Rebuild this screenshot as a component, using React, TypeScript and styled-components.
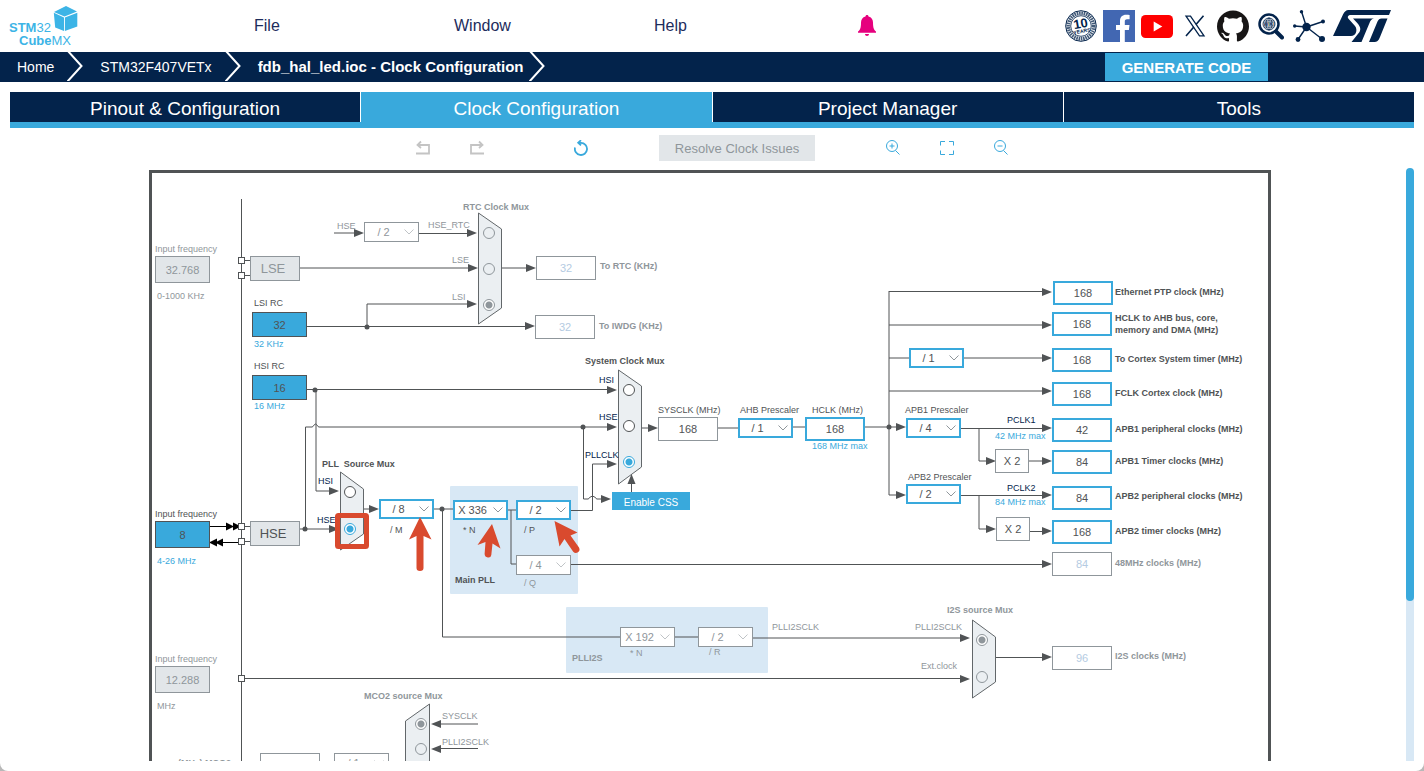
import React from "react";
import styled, { createGlobalStyle, css } from "styled-components";
import { SiGithub } from "react-icons/si";

const color = {
  navy: "#03234b",
  sky: "#39a9dc",
  pale: "#d8e8f5",
  ink: "#505355",
  grey: "#8f969b",
  faded: "#b4cbe2",
  fill: "#e2e6e9",
  red: "#d94a2e",
};

/* Top-left corner of the drawing sheet, in diagram units. */
const SHEET = { x: 152, y: 173 };
const SHEET_WIDTH = 1116;
const SHEET_HEIGHT = 800;

const GlobalStyle = createGlobalStyle`
  * { box-sizing: border-box; }
  body {
    margin: 0;
    background: #b8b8b8;
    font-family: "Liberation Sans", Arial, sans-serif;
  }
  button, input, select { font-family: inherit; margin: 0; }
`;

const Page = styled.div`
  display: flex;
  flex-direction: column;
  height: 100vh;
  padding-bottom: 10px;
  overflow: hidden;
  background: #fff;
  border-radius: 0 0 8px 8px;
`;

/* ---------- header ---------- */

const Header = styled.header`
  display: flex;
  align-items: center;
  flex: none;
  height: 52px;
  padding-right: 31px;
`;

const LogoLink = styled.a`
  display: block;
  flex: 0 0 254px;
  height: 52px;
  svg { display: block; }
`;

const Menu = styled.nav`
  display: flex;
  flex: 0 1 600px;
`;

const MenuButton = styled.button`
  flex: 0 1 200px;
  padding: 0;
  border: 0;
  background: none;
  color: #1d2c5c;
  font-size: 16px;
  line-height: 20px;
  text-align: left;
`;

const BellButton = styled.button`
  display: flex;
  margin-left: 3px;
  padding: 0;
  border: 0;
  background: none;
`;

const Links = styled.div`
  display: flex;
  align-items: center;
  gap: 6px;
  margin-left: auto;
`;

const IconLink = styled.a<{ $width: number; $color?: string }>`
  display: flex;
  justify-content: center;
  flex: none;
  width: ${(p) => p.$width}px;
  color: ${(p) => p.$color ?? color.navy};
`;

/* ---------- breadcrumb ---------- */

const CrumbBar = styled.div`
  display: flex;
  justify-content: space-between;
  align-items: center;
  flex: none;
  height: 30px;
  padding-right: 156px;
  background: ${color.navy};
`;

const Crumbs = styled.nav`
  display: flex;
`;

const Crumb = styled.a<{ $current?: boolean }>`
  padding: 0 ${(p) => (p.$current ? 6 : 13)}px 0 17px;
  color: #fff;
  font-size: ${(p) => (p.$current ? 15 : 14)}px;
  font-weight: ${(p) => (p.$current ? 700 : 400)};
  line-height: 32px;
  white-space: nowrap;
  text-decoration: none;
`;

const GenerateButton = styled.button`
  width: 163px;
  height: 28px;
  padding: 0;
  border: 0;
  background: ${color.sky};
  color: #fff;
  font-size: 15px;
  font-weight: 700;
`;

/* ---------- tabs ---------- */

const Tabs = styled.div`
  display: grid;
  grid-template-columns: repeat(4, 1fr);
  gap: 1px;
  flex: none;
  margin: 10px 10px 0;
  border-bottom: 6px solid ${color.sky};
`;

const Tab = styled.button<{ $active?: boolean }>`
  height: 30px;
  padding: 3px 0 0;
  border: 0;
  background: ${(p) => (p.$active ? color.sky : color.navy)};
  color: #fff;
  font-size: 19px;
  line-height: 27px;
`;

/* ---------- toolbar ---------- */

const Toolbar = styled.div`
  display: flex;
  align-items: center;
  justify-content: center;
  gap: 71px;
  flex: none;
  height: 40px;
`;

const ToolGroup = styled.div<{ $trail?: number }>`
  display: flex;
  gap: 40px;
  padding-right: ${(p) => p.$trail ?? 0}px;
`;

const ToolButton = styled.button`
  display: flex;
  padding: 0;
  border: 0;
  background: none;
  color: ${color.sky};
  &:disabled { color: #c4c4c4; }
`;

const ResolveButton = styled.button`
  width: 156px;
  height: 26px;
  padding: 0;
  border: 0;
  background: ${color.fill};
  color: ${color.grey};
  font-size: 13px;
`;

/* ---------- diagram ---------- */

const Workspace = styled.main`
  display: flex;
  flex: 1;
  min-height: 0;
  padding: 0 10px 0 14px;
`;

const Viewport = styled.div`
  display: flex;
  justify-content: center;
  align-items: flex-start;
  flex: 1;
  min-width: 0;
  overflow: hidden;
`;

const ScrollTrack = styled.div`
  flex: none;
  width: 8px;
  background: linear-gradient(#fff 10px, ${color.pale} 10px);
`;

const ScrollThumb = styled.div`
  height: 73%;
  border-radius: 4px;
  background: ${color.sky};
`;

const Sheet = styled.div`
  position: relative;
  flex: none;
  width: ${SHEET_WIDTH + 6}px;
  height: ${SHEET_HEIGHT}px;
  margin-top: 2px;
  border: 3px solid ${color.ink};
`;

const Layer = styled.svg`
  position: absolute;
  inset: 0;
  pointer-events: none;
`;

const placed = css<{ $x: number; $y: number }>`
  position: absolute;
  left: ${(p) => p.$x - SHEET.x}px;
  top: ${(p) => p.$y - SHEET.y}px;
`;

const Panel = styled.div<{ $x: number; $y: number; $w: number; $h: number }>`
  ${placed}
  width: ${(p) => p.$w}px;
  height: ${(p) => p.$h}px;
  border-radius: 1px;
  background: ${color.pale};
`;

const Caption = styled.span<{ $x: number; $y: number; $tone: string; $bold?: boolean }>`
  ${placed}
  color: ${(p) => p.$tone};
  font-size: 9px;
  font-weight: ${(p) => (p.$bold ? 700 : 400)};
  line-height: 12px;
  white-space: pre;
`;

type Kind = "live" | "plain" | "off" | "source" | "idle";

const kinds: Record<Kind, ReturnType<typeof css>> = {
  live: css`
    border: 2px solid ${color.sky};
    background: #fff;
    color: ${color.ink};
  `,
  plain: css`
    border: 1px solid ${color.grey};
    background: #fff;
    color: ${color.ink};
  `,
  off: css`
    border: 1px solid ${color.grey};
    background: #fff;
    color: ${color.faded};
  `,
  source: css`
    border: 1px solid ${color.ink};
    background: ${color.sky};
    color: ${color.ink};
  `,
  idle: css`
    border: 1px solid ${color.grey};
    background: ${color.fill};
    color: ${color.grey};
  `,
};

const Field = styled.input<{ $x: number; $y: number; $w: number; $h: number; $kind: Kind }>`
  ${placed}
  width: ${(p) => p.$w}px;
  height: ${(p) => p.$h}px;
  padding: 0;
  border-radius: 0;
  font-size: 11px;
  text-align: center;
  ${(p) => kinds[p.$kind]}
`;

const Oscillator = styled.button<{ $x: number; $y: number; $tone: string }>`
  ${placed}
  width: 50px;
  height: 25px;
  padding: 0 4px 0 0;
  border: 1px solid ${color.grey};
  background: ${color.fill};
  color: ${(p) => p.$tone};
  font-size: 13px;
`;

const Factor = styled.span<{ $x: number; $y: number }>`
  ${placed}
  width: 34px;
  height: 24px;
  border: 1px solid ${color.grey};
  background: #fff;
  color: ${color.ink};
  font-size: 11px;
  line-height: 22px;
  text-align: center;
`;

const CssButton = styled.button<{ $x: number; $y: number }>`
  ${placed}
  width: 78px;
  height: 18px;
  padding: 2px 0 0;
  border: 0;
  background: ${color.sky};
  color: #fff;
  font-size: 10px;
`;

const SelectBox = styled.span<{ $x: number; $y: number; $off?: boolean }>`
  ${placed}
  display: block;
  width: 55px;
  height: 20px;
  svg {
    position: absolute;
    right: 5px;
    top: 7px;
    color: ${(p) => (p.$off ? "#c0c4c7" : color.grey)};
    pointer-events: none;
  }
`;

const NativeSelect = styled.select<{ $off?: boolean }>`
  display: block;
  width: 55px;
  height: 20px;
  padding: 0 16px 0 0;
  border: ${(p) => (p.$off ? `1px solid ${color.grey}` : `2px solid ${color.sky}`)};
  border-radius: 0;
  appearance: none;
  background: #fff;
  color: ${(p) => (p.$off ? color.grey : color.ink)};
  font-size: 11px;
  text-align: center;
  text-align-last: center;
  opacity: 1;
`;

const Radio = styled.input<{ $x: number; $y: number; $tone: string }>`
  ${placed}
  width: 12px;
  height: 12px;
  border: 1px solid ${(p) => p.$tone};
  border-radius: 50%;
  appearance: none;
  background: #fff;
  &:disabled { background: transparent; }
  &:checked {
    background: radial-gradient(circle, ${(p) => p.$tone} 3px, #fff 4px);
  }
`;

/* ---------- data ---------- */

type Note = { x: number; y: number; text: string; tone?: string; bold?: boolean; id?: string };

const notes: Note[] = [
  { x: 155, y: 243, text: "Input frequency", tone: color.grey, id: "lse-in" },
  { x: 157, y: 290, text: "0-1000 KHz", tone: color.grey },
  { x: 254, y: 297, text: "LSI RC", id: "lsi-rc" },
  { x: 254, y: 338, text: "32 KHz", tone: color.sky },
  { x: 254, y: 360, text: "HSI RC", id: "hsi-rc" },
  { x: 254, y: 400, text: "16 MHz", tone: color.sky },
  { x: 337, y: 220, text: "HSE", tone: color.grey },
  { x: 428, y: 219, text: "HSE_RTC", tone: color.grey },
  { x: 452, y: 254, text: "LSE", tone: color.grey },
  { x: 452, y: 291, text: "LSI", tone: color.grey },
  { x: 463, y: 201, text: "RTC Clock Mux", tone: color.grey, bold: true },
  { x: 600, y: 260, text: "To RTC (KHz)", tone: color.grey, bold: true, id: "rtc" },
  { x: 599, y: 320, text: "To IWDG (KHz)", tone: color.grey, bold: true, id: "iwdg" },
  { x: 585, y: 355, text: "System Clock Mux", bold: true },
  { x: 599, y: 374, text: "HSI", tone: color.navy },
  { x: 599, y: 411, text: "HSE", tone: color.navy },
  { x: 585, y: 449, text: "PLLCLK", tone: color.navy },
  { x: 658, y: 404, text: "SYSCLK (MHz)", id: "sysclk" },
  { x: 740, y: 404, text: "AHB Prescaler", id: "ahb" },
  { x: 812, y: 404, text: "HCLK (MHz)", id: "hclk" },
  { x: 812, y: 440, text: "168 MHz max", tone: color.sky },
  { x: 905, y: 404, text: "APB1 Prescaler", id: "apb1" },
  { x: 908, y: 471, text: "APB2 Prescaler", id: "apb2" },
  { x: 1007, y: 414, text: "PCLK1", tone: color.navy },
  { x: 995, y: 430, text: "42 MHz max", tone: color.sky },
  { x: 1007, y: 482, text: "PCLK2", tone: color.navy },
  { x: 995, y: 496, text: "84 MHz max", tone: color.sky },
  { x: 1115, y: 286, text: "Ethernet PTP clock (MHz)", bold: true, id: "eth" },
  { x: 1115, y: 312, text: "HCLK to AHB bus, core,\nmemory and DMA (MHz)", bold: true, id: "ahb-bus" },
  { x: 1115, y: 353, text: "To Cortex System timer (MHz)", bold: true, id: "cortex" },
  { x: 1115, y: 387, text: "FCLK Cortex clock (MHz)", bold: true, id: "fclk" },
  { x: 1115, y: 423, text: "APB1 peripheral clocks (MHz)", bold: true, id: "apb1-per" },
  { x: 1115, y: 455, text: "APB1 Timer clocks (MHz)", bold: true, id: "apb1-tim" },
  { x: 1115, y: 490, text: "APB2 peripheral clocks (MHz)", bold: true, id: "apb2-per" },
  { x: 1115, y: 525, text: "APB2 timer clocks (MHz)", bold: true, id: "apb2-tim" },
  { x: 1115, y: 557, text: "48MHz clocks (MHz)", tone: color.grey, bold: true, id: "usb" },
  { x: 1115, y: 650, text: "I2S clocks (MHz)", tone: color.grey, bold: true, id: "i2s" },
  { x: 155, y: 508, text: "Input frequency", id: "hse-in" },
  { x: 157, y: 555, text: "4-26 MHz", tone: color.sky },
  { x: 322, y: 458, text: "PLL  Source Mux", bold: true },
  { x: 318, y: 475, text: "HSI", tone: color.navy },
  { x: 317, y: 514, text: "HSE", tone: color.navy },
  { x: 390, y: 524, text: "/ M", id: "pll-m" },
  { x: 463, y: 524, text: "* N", id: "pll-n" },
  { x: 524, y: 524, text: "/ P", id: "pll-p" },
  { x: 524, y: 577, text: "/ Q", tone: color.grey, id: "pll-q" },
  { x: 455, y: 574, text: "Main PLL", bold: true },
  { x: 630, y: 647, text: "* N", tone: color.grey, id: "i2s-n" },
  { x: 709, y: 646, text: "/ R", tone: color.grey, id: "i2s-r" },
  { x: 572, y: 652, text: "PLLI2S", tone: color.grey, bold: true },
  { x: 772, y: 621, text: "PLLI2SCLK", tone: color.grey },
  { x: 915, y: 621, text: "PLLI2SCLK", tone: color.grey },
  { x: 921, y: 660, text: "Ext.clock", tone: color.grey },
  { x: 947, y: 604, text: "I2S source Mux", tone: color.grey, bold: true },
  { x: 155, y: 653, text: "Input frequency", tone: color.grey, id: "i2s-in" },
  { x: 157, y: 700, text: "MHz", tone: color.grey },
  { x: 364, y: 690, text: "MCO2 source Mux", tone: color.grey, bold: true },
  { x: 442, y: 710, text: "SYSCLK", tone: color.grey },
  { x: 442, y: 736, text: "PLLI2SCLK", tone: color.grey },
  { x: 178, y: 757, text: "(MHz) MCO2", tone: color.grey, bold: true, id: "mco2" },
];

type FieldItem = { id: string; x: number; y: number; w?: number; h?: number; value: string; kind: Kind };

const fields: FieldItem[] = [
  { id: "lse-in", x: 155, y: 256, w: 55, h: 27, value: "32.768", kind: "idle" },
  { id: "hse-in", x: 155, y: 521, w: 55, h: 27, value: "8", kind: "source" },
  { id: "i2s-in", x: 155, y: 666, w: 55, h: 27, value: "12.288", kind: "idle" },
  { id: "lsi-rc", x: 252, y: 312, w: 55, h: 25, value: "32", kind: "source" },
  { id: "hsi-rc", x: 252, y: 375, w: 55, h: 25, value: "16", kind: "source" },
  { id: "rtc", x: 536, y: 256, value: "32", kind: "off" },
  { id: "iwdg", x: 535, y: 315, value: "32", kind: "off" },
  { id: "sysclk", x: 658, y: 417, value: "168", kind: "plain" },
  { id: "hclk", x: 805, y: 417, value: "168", kind: "live" },
  { id: "eth", x: 1053, y: 281, value: "168", kind: "live" },
  { id: "ahb-bus", x: 1052, y: 312, value: "168", kind: "live" },
  { id: "cortex", x: 1052, y: 348, value: "168", kind: "live" },
  { id: "fclk", x: 1052, y: 382, value: "168", kind: "live" },
  { id: "apb1-per", x: 1052, y: 418, value: "42", kind: "live" },
  { id: "apb1-tim", x: 1052, y: 450, value: "84", kind: "live" },
  { id: "apb2-per", x: 1052, y: 486, value: "84", kind: "live" },
  { id: "apb2-tim", x: 1052, y: 520, value: "168", kind: "live" },
  { id: "usb", x: 1052, y: 552, value: "84", kind: "off" },
  { id: "i2s", x: 1052, y: 646, value: "96", kind: "off" },
  { id: "mco2", x: 260, y: 753, value: "168", kind: "off" },
];

type SelectItem = { id: string; x: number; y: number; value: string; off?: boolean; label?: string };

const selects: SelectItem[] = [
  { id: "hse-rtc", x: 364, y: 222, value: "/ 2", off: true, label: "HSE RTC divider" },
  { id: "pll-m", x: 379, y: 499, value: "/ 8" },
  { id: "pll-n", x: 453, y: 500, value: "X 336" },
  { id: "pll-p", x: 516, y: 500, value: "/ 2" },
  { id: "pll-q", x: 516, y: 555, value: "/ 4", off: true },
  { id: "i2s-n", x: 620, y: 627, value: "X 192", off: true },
  { id: "i2s-r", x: 698, y: 627, value: "/ 2", off: true },
  { id: "ahb", x: 738, y: 418, value: "/ 1" },
  { id: "apb1", x: 906, y: 418, value: "/ 4" },
  { id: "apb2", x: 906, y: 484, value: "/ 2" },
  { id: "cortex-div", x: 909, y: 348, value: "/ 1", label: "Cortex timer divider" },
  { id: "mco2-div", x: 334, y: 753, value: "/ 1", off: true, label: "MCO2 divider" },
];

type RadioItem = { name: string; label: string; x: number; y: number; off?: boolean; on?: boolean };

const radios: RadioItem[] = [
  { name: "rtc-mux", label: "HSE_RTC", x: 483, y: 227, off: true },
  { name: "rtc-mux", label: "LSE", x: 483, y: 263, off: true },
  { name: "rtc-mux", label: "LSI", x: 483, y: 299, off: true, on: true },
  { name: "sys-mux", label: "HSI", x: 623, y: 384 },
  { name: "sys-mux", label: "HSE", x: 623, y: 420 },
  { name: "sys-mux", label: "PLLCLK", x: 623, y: 456, on: true },
  { name: "pll-mux", label: "HSI", x: 344, y: 486 },
  { name: "pll-mux", label: "HSE", x: 344, y: 523, on: true },
  { name: "i2s-mux", label: "PLLI2SCLK", x: 976, y: 634, off: true, on: true },
  { name: "i2s-mux", label: "Ext.clock", x: 976, y: 671, off: true },
  { name: "mco2-mux", label: "SYSCLK", x: 415, y: 718, off: true, on: true },
  { name: "mco2-mux", label: "PLLI2SCLK", x: 415, y: 743, off: true },
];

const wires = [
  "M241.5 199V960",
  "M245 260.5H250M245 275.5H250M245 526.5H250M245 541.5H250",
  "M334 233H357M419 233.5H470M300 268H470M307 326.5H528M367 326V304H470M502 268H528",
  "M307 389.5H610M316 390V491H332",
  "M305.5 529V427H312q1 0 1.500 -1.500q2 -3 4 0q.5 1.500 1.500 1.500H610M300 529H332",
  "M583.5 427V499H588q1 0 1.500 -1.500q3 -3 6 0q.5 1.500 1.500 1.500H604",
  "M571 510.500H592.500V464H610",
  "M364 509H372M434 509H453M442.500 509V637H620M508 510H516M511 510V564H516M571 564.500H1045",
  "M675 637H698M753 638H963M245 678.500H963M996 657.500H1045",
  "M631.500 492V480M642 428H651M718 428H738M793 427H805M865 427H899",
  "M889 291V495H899M889 291.500H1045M889 325H1045M889 358H909M964 358H1045M889 391H1045",
  "M961 428.500H1045M979 428V461H988M1029 461H1045",
  "M961 495.500H1045M979 495V529H989M1030 531.500H1045",
  "M440 724H478M440 748.500H478M320 765H334M389 765H405",
];

const rightHeads: [number, number][] = [
  [364, 233], [477, 233], [478, 268], [477, 304], [536, 268], [535, 326],
  [617, 390], [617, 427], [617, 464], [339, 491], [339, 529], [379, 509],
  [611, 499], [658, 428], [906, 427], [906, 495],
  [1052, 292], [1052, 325], [1052, 358], [1052, 391], [1052, 428], [1052, 461],
  [1052, 495], [1052, 531], [1052, 564], [1052, 657], [996, 461], [996, 529],
  [970, 638], [970, 679],
];

const leftHeads: [number, number][] = [[431, 724], [431, 749], [322, 765], [391, 765]];

const dots: [number, number][] = [
  [367, 327], [315, 390], [305, 529], [583, 427], [442, 509], [889, 427],
];

const muxes = [
  "478.500,213 501.500,229 501.500,308 478.500,324",
  "618.500,370 641.500,386 641.500,467 618.500,484",
  "340.500,472 363.500,489 363.500,534 340.500,550",
  "972.500,620 995.500,637 995.500,682 972.500,698",
  "429.500,704 405.500,721 405.500,800 429.500,816",
];

const pins = [257.5, 272.5, 523.5, 538.5, 675.5];

/* ---------- parts ---------- */

const viewBox = `${SHEET.x} ${SHEET.y} ${SHEET_WIDTH} ${SHEET_HEIGHT - 6}`;

const Wiring = () => (
  <Layer width={SHEET_WIDTH} height={SHEET_HEIGHT - 6} viewBox={viewBox} aria-hidden="true">
    {wires.map((d) => (
      <path key={d} d={d} fill="none" stroke={color.ink} />
    ))}
    {muxes.map((m) => (
      <polygon key={m} points={m} fill="#ebeff2" stroke="#62676a" />
    ))}
    {rightHeads.map(([x, y]) => (
      <path key={`${x}-${y}`} d={`M${x} ${y}l-10 -4v8z`} fill={color.ink} />
    ))}
    {leftHeads.map(([x, y]) => (
      <path key={`${x}-${y}`} d={`M${x} ${y}l10 -4v8z`} fill={color.ink} />
    ))}
    <path d="M631.500 474l-4 10h8z" fill={color.ink} />
    {dots.map(([x, y]) => (
      <circle key={`${x}-${y}`} cx={x} cy={y} r="2.500" fill={color.ink} />
    ))}
    <path
      d="M210 526.500H238M216 542.500H238"
      stroke="#000"
    />
    <path
      d="M234 526.500l-8 -4v8zM241 526.500l-8 -4v8zM209 542.500l8 -4v8zM215 542.500l8 -4v8z"
      fill="#000"
    />
    {pins.map((y) => (
      <rect key={y} x="238.500" y={y} width="6" height="6" fill="#fff" stroke={color.ink} />
    ))}
  </Layer>
);

const Annotations = () => (
  <Layer width={SHEET_WIDTH} height={SHEET_HEIGHT - 6} viewBox={viewBox} aria-hidden="true">
    <rect x="337.500" y="515.500" width="29" height="31" rx="1" fill="none" stroke={color.red} strokeWidth="5" />
    <g fill={color.red}>
      <path d="M420 517L431.500 539.500L423.500 536V568q0 3 -3.500 3t-3.500 -3V536L409 539.500Z" />
      <path d="M492 524L500.500 548.500L492.500 543.500L491.300 555q-.5 3 -3.500 2.500t-3.200 -3.500L485.500 542L477.500 545Z" />
      <path d="M554.500 521L577.500 532.500L570.500 535.500L579 547.500q1.500 3 -1 4.800t-4.800 -.5L564.500 539L559.500 546.500Z" />
    </g>
  </Layer>
);

const DividerSelect = ({ id, x, y, value, off, label }: SelectItem) => (
  <SelectBox $x={x} $y={y} $off={off}>
    <NativeSelect id={id} $off={off} disabled={off} aria-label={label} defaultValue={value}>
      <option>{value}</option>
    </NativeSelect>
    <svg width="10" height="6" viewBox="0 0 10 6" fill="none" stroke="currentColor" aria-hidden="true">
      <path d="M.5 .5L5 5L9.500 .5" />
    </svg>
  </SelectBox>
);

const radioTone = (r: RadioItem) => (r.off ? color.grey : r.on ? color.sky : color.ink);

const CubeLogo = () => (
  <svg width="90" height="52" viewBox="0 0 90 52" role="img" aria-label="STM32 CubeMX">
    <g fill="#3cb4e6">
      <path d="M66 6L77 11.500L64.500 16.600L54 12Z" />
      <path d="M77.300 12.700V26.500L64.900 31V17.500Z" />
      <path d="M53.800 12.700L64 17.500V31L55.200 27.500Z" />
      <g fontFamily='"Liberation Sans", Arial, sans-serif' fontSize="13">
        <text x="9" y="32">
          <tspan fontWeight="700">STM</tspan>
          <tspan>32</tspan>
        </text>
        <text x="19" y="45">
          <tspan fontWeight="700">Cube</tspan>
          <tspan>MX</tspan>
        </text>
      </g>
    </g>
  </svg>
);

const Chevron = () => (
  <svg width="16" height="30" viewBox="0 0 16 30" fill="none" stroke="#fff" strokeWidth="2" aria-hidden="true">
    <path d="M0 -1L14.500 15L0 31" />
  </svg>
);

const BadgeIcon = () => (
  <svg width="32" height="32" viewBox="0 0 32 32" aria-hidden="true">
    <circle cx="16" cy="16" r="15.300" fill="#fff" stroke={color.navy} />
    <circle cx="16" cy="16" r="12.700" fill="none" stroke={color.navy} strokeWidth="3.600" strokeDasharray="1.600 .7" opacity=".75" />
    <circle cx="16" cy="16" r="10.300" fill="#fff" stroke={color.navy} strokeWidth=".8" />
    <g transform="rotate(-10 16 16)" fill={color.navy} fontFamily="Liberation Sans, sans-serif" fontWeight="700" textAnchor="middle">
      <text x="16" y="18" fontSize="13">10</text>
      <text x="16" y="23" fontSize="5">YEARS</text>
    </g>
  </svg>
);

const FacebookIcon = () => (
  <svg width="32" height="32" viewBox="0 0 32 32" aria-hidden="true">
    <rect width="32" height="32" fill="#4267b2" />
    <path
      fill="#fff"
      d="M17 32V20h-4v-5h4v-4c0-4 2.500-6.200 6-6.200 1.700 0 3.100.1 3.600.2v4.300h-2.500c-1.900 0-2.300.9-2.300 2.300V15h4.700l-.6 5h-4.100v12z"
    />
  </svg>
);

const YoutubeIcon = () => (
  <svg width="32" height="23" viewBox="0 0 32 23" aria-hidden="true">
    <rect width="32" height="23" rx="4.500" fill="#f00" />
    <path d="M12.700 6.500v10l8.600-5z" fill="#fff" />
  </svg>
);

const XIcon = () => (
  <svg width="22" height="22" viewBox="0 0 22 22" fill="none" stroke={color.navy} aria-hidden="true">
    <path d="M2 1.200H6.500L20 20.800H15.500Z" strokeWidth="1.300" />
    <path d="M19.500 .8L12 9.500M9.800 12L2 21" strokeWidth="1.600" />
  </svg>
);

const WikiIcon = () => (
  <svg width="26" height="28" viewBox="0 0 26 28" fill="none" stroke={color.navy} aria-hidden="true">
    <circle cx="11" cy="12" r="9.500" strokeWidth="2.500" />
    <path d="M18 19.500L24 25.500" strokeWidth="4" strokeLinecap="round" />
    <g strokeWidth=".8">
      <circle cx="11" cy="12" r="6" />
      <ellipse cx="11" cy="12" rx="3" ry="6" />
      <path d="M11 6V9M11 15V18M6 9H16M6 15H16" />
    </g>
    <text x="11" y="14" fontSize="5" fontWeight="700" fontFamily="Liberation Sans, sans-serif" textAnchor="middle" fill={color.navy} stroke="none">
      WIKI
    </text>
  </svg>
);

const NetworkIcon = () => (
  <svg width="32" height="32" viewBox="0 0 32 32" fill={color.navy} aria-hidden="true">
    <path d="M8.500 1.500L13.500 17L30 11.500M13.500 17L1.500 16M13.500 17L5 29.500M13.500 17L29 29" fill="none" stroke={color.navy} strokeWidth="1.400" />
    <circle cx="13.500" cy="17" r="4.200" />
    <circle cx="8.500" cy="1.800" r="1.700" />
    <circle cx="30" cy="11.500" r="2" />
    <circle cx="1.700" cy="16" r="1.700" />
    <circle cx="5" cy="29.500" r="2.400" />
    <circle cx="29" cy="29" r="3" />
  </svg>
);

const StIcon = () => (
  <svg width="58" height="32" viewBox="0 0 58 32" fill={color.navy} aria-hidden="true">
    <path d="M15.500 0H58L56 5H18C15 5 14 7 15.500 8.800L22 16C25 20 23 26 18 26H0L10 4.500C11.500 1.500 13 0 15.500 0Z" />
    <path d="M20 8.500H41C38.500 8.800 37.500 10.500 36.500 13L28.500 32H18.500L26.500 22C28.500 18 27 15.500 20 8.500Z" />
    <path d="M44.500 11.500C45.500 9.500 46.500 8.500 48.500 8.500H54.500L47 27C45.500 31 44 32 41 32H36Z" />
  </svg>
);

const BellIcon = () => (
  <svg width="20" height="22" viewBox="0 0 20 22" fill="#e6007e" aria-hidden="true">
    <path d="M10 0c1 0 1.500.6 1.500 1.600 3 .8 4.500 3 4.500 6 0 5.500 1 7.800 3 9v1.200H1v-1.200c2-1.200 3-3.500 3-9 0-3 1.500-5.200 4.500-6C8.500.6 9 0 10 0zM8 19h4c0 1.300-.8 2-2 2s-2-.7-2-2z" />
  </svg>
);

const UndoArt = () => <path d="M0 13.500H13V5H2M5 1.500L1.500 5L5 8" strokeWidth="1.800" />;
const RedoArt = () => <path d="M14 13.500H1V5H12M9 1.500L12.500 5L9 8" strokeWidth="1.800" />;
const ResetArt = () => <path d="M1 7.500A6.100 6.100 0 1 0 7 2.800H4.500M7 .2L4.200 2.800L7 5.400" strokeWidth="1.800" />;
const ZoomInArt = () => <path d="M9.500 10.500L13.500 14.500M6 3.500V8.500M3.500 6H8.500M6 .5a5.500 5.500 0 1 1 0 11a5.500 5.500 0 1 1 0 -11" />;
const ZoomOutArt = () => <path d="M9.500 10.500L13.500 14.500M3.500 6H8.500M6 .5a5.500 5.500 0 1 1 0 11a5.500 5.500 0 1 1 0 -11" />;
const FitArt = () => <path d="M.5 5.500V1.500H5M9 1.500H13.500V5.500M13.500 10.500V14.500H9M5 14.500H.5V10.500" />;

const Tool = ({ label, disabled, children }: { label: string; disabled?: boolean; children: React.ReactNode }) => (
  <ToolButton aria-label={label} disabled={disabled}>
    <svg width="14" height="16" viewBox="0 0 14 16" fill="none" stroke="currentColor" aria-hidden="true">
      {children}
    </svg>
  </ToolButton>
);

const tabs = ["Pinout & Configuration", "Clock Configuration", "Project Manager", "Tools"];

export default function App() {
  return (
    <>
      <GlobalStyle />
      <Page>
        <Header>
          <LogoLink href="#home">
            <CubeLogo />
          </LogoLink>
          <Menu>
            <MenuButton>File</MenuButton>
            <MenuButton>Window</MenuButton>
            <MenuButton>Help</MenuButton>
          </Menu>
          <BellButton aria-label="Notifications">
            <BellIcon />
          </BellButton>
          <Links>
            <IconLink href="#longevity" aria-label="10 years longevity" $width={32}><BadgeIcon /></IconLink>
            <IconLink href="#facebook" aria-label="Facebook" $width={32}><FacebookIcon /></IconLink>
            <IconLink href="#youtube" aria-label="YouTube" $width={32}><YoutubeIcon /></IconLink>
            <IconLink href="#x" aria-label="X" $width={32}><XIcon /></IconLink>
            <IconLink href="#github" aria-label="GitHub" $width={32} $color="#181616"><SiGithub size={32} /></IconLink>
            <IconLink href="#wiki" aria-label="Wiki" $width={32}><WikiIcon /></IconLink>
            <IconLink href="#community" aria-label="Community" $width={32}><NetworkIcon /></IconLink>
            <IconLink href="#st" aria-label="STMicroelectronics" $width={62}><StIcon /></IconLink>
          </Links>
        </Header>

        <CrumbBar>
          <Crumbs aria-label="Breadcrumb">
            <Crumb href="#home">Home</Crumb>
            <Chevron />
            <Crumb href="#mcu">STM32F407VETx</Crumb>
            <Chevron />
            <Crumb href="#project" $current>fdb_hal_led.ioc - Clock Configuration</Crumb>
            <Chevron />
          </Crumbs>
          <GenerateButton>GENERATE CODE</GenerateButton>
        </CrumbBar>

        <Tabs>
          {tabs.map((t) => (
            <Tab key={t} $active={t === "Clock Configuration"}>{t}</Tab>
          ))}
        </Tabs>

        <Toolbar>
          <ToolGroup $trail={19}>
            <Tool label="Undo" disabled><UndoArt /></Tool>
            <Tool label="Redo" disabled><RedoArt /></Tool>
          </ToolGroup>
          <Tool label="Reset"><ResetArt /></Tool>
          <ResolveButton disabled>Resolve Clock Issues</ResolveButton>
          <ToolGroup>
            <Tool label="Zoom in"><ZoomInArt /></Tool>
            <Tool label="Fit"><FitArt /></Tool>
            <Tool label="Zoom out"><ZoomOutArt /></Tool>
          </ToolGroup>
        </Toolbar>

        <Workspace>
          <Viewport>
            <Sheet>
              <Panel $x={450} $y={486} $w={128} $h={108} />
              <Panel $x={566} $y={607} $w={202} $h={66} />
              <Wiring />
              {notes.map((n) => (
                <Caption
                  key={`${n.x}-${n.y}`}
                  {...(n.id ? { as: "label" as const, htmlFor: n.id } : {})}
                  $x={n.x}
                  $y={n.y}
                  $tone={n.tone ?? color.ink}
                  $bold={n.bold}
                >
                  {n.text}
                </Caption>
              ))}
              <Oscillator $x={250} $y={256} $tone={color.grey} disabled>LSE</Oscillator>
              <Oscillator $x={250} $y={521} $tone={color.ink}>HSE</Oscillator>
              {fields.map((f) => (
                <Field
                  key={f.id}
                  id={f.id}
                  $x={f.x}
                  $y={f.y}
                  $w={f.w ?? 60}
                  $h={f.h ?? 24}
                  $kind={f.kind}
                  defaultValue={f.value}
                />
              ))}
              {selects.map((s) => (
                <DividerSelect key={s.id} {...s} />
              ))}
              <Factor $x={995} $y={449}>X 2</Factor>
              <Factor $x={996} $y={517}>X 2</Factor>
              <CssButton $x={612} $y={492}>Enable CSS</CssButton>
              {radios.map((r) => (
                <Radio
                  key={`${r.x}-${r.y}`}
                  type="radio"
                  name={r.name}
                  aria-label={r.label}
                  $x={r.x}
                  $y={r.y}
                  $tone={radioTone(r)}
                  disabled={r.off}
                  defaultChecked={r.on}
                />
              ))}
              <Annotations />
            </Sheet>
          </Viewport>
          <ScrollTrack>
            <ScrollThumb />
          </ScrollTrack>
        </Workspace>
      </Page>
    </>
  );
}
